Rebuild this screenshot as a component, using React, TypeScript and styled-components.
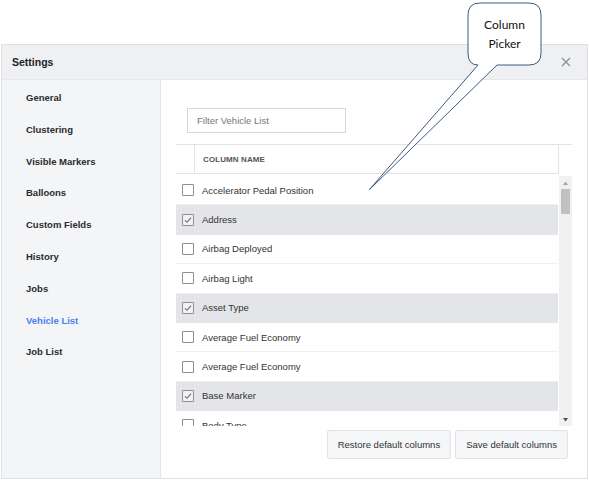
import React from 'react';
import styled, { createGlobalStyle } from 'styled-components';

const GlobalStyle = createGlobalStyle`
  html, body {
    margin: 0;
    padding: 0;
    background: #fff;
  }
  * {
    box-sizing: border-box;
  }
`;

const Page = styled.div`
  position: relative;
  width: 589px;
  height: 481px;
  padding: 44px 0 0 1px;
  overflow: hidden;
  font-family: 'Liberation Sans', Arial, sans-serif;
`;

const Dialog = styled.div`
  width: 587px;
  height: 435px;
  border: 1px solid #dfe0e3;
  display: flex;
  flex-direction: column;
  background: #fff;
`;

const Header = styled.div`
  height: 35px;
  flex: none;
  display: flex;
  align-items: center;
  justify-content: space-between;
  padding: 0 16px 0 10px;
  background: #eef0f2;
  border-bottom: 1px solid #e6e7ea;
`;

const Title = styled.div`
  font-size: 10.5px;
  font-weight: bold;
  color: #222;
`;

const CloseButton = styled.button`
  width: 11px;
  height: 11px;
  padding: 0;
  border: 0;
  background: none;
  display: flex;
  align-items: center;
  justify-content: center;
  cursor: pointer;
`;

const Body = styled.div`
  flex: 1;
  display: flex;
  min-height: 0;
`;

const Sidebar = styled.nav`
  width: 159px;
  flex: none;
  background: #f4f5f7;
  border-right: 1px solid #e4e5e8;
  padding-top: 2px;
`;

const NavItem = styled.div<{ $active?: boolean }>`
  height: 31.8px;
  line-height: 31.8px;
  padding-left: 24px;
  font-size: 9.5px;
  font-weight: bold;
  color: ${(p) => (p.$active ? '#4a7ff0' : '#2b2b2b')};
  cursor: pointer;
`;

const Content = styled.div`
  flex: 1;
  padding: 28px 16px 0 15px;
  display: flex;
  flex-direction: column;
`;

const FilterInput = styled.input`
  width: 159px;
  height: 25px;
  margin-left: 11px;
  border: 1px solid #d6d7da;
  padding: 0 9px;
  font-family: inherit;
  font-size: 9.5px;
  color: #333;
  outline: none;
  &::placeholder {
    color: #767676;
  }
`;

const TableHead = styled.div`
  margin-top: 11px;
  height: 30px;
  display: flex;
  border-top: 1px solid #e3e4e7;
`;

const HeadCells = styled.div`
  width: 383px;
  display: flex;
  border-right: 1px solid #e3e4e7;
  border-bottom: 1px solid #e3e4e7;
`;

const HeadCheckCol = styled.div`
  width: 19px;
  border-right: 1px solid #e3e4e7;
`;

const HeadLabel = styled.div`
  flex: 1;
  display: flex;
  align-items: center;
  padding-left: 8px;
  font-size: 8px;
  font-weight: bold;
  color: #555;
  letter-spacing: 0.1px;
`;

const ScrollArea = styled.div`
  height: 252px;
  padding-top: 2px;
  display: flex;
`;

const RowList = styled.div`
  width: 382px;
  overflow: hidden;
`;

const Row = styled.label<{ $checked: boolean }>`
  height: 29.4px;
  display: flex;
  align-items: center;
  gap: 8px;
  padding-left: 6px;
  background: ${(p) => (p.$checked ? '#e4e5e8' : '#fff')};
  border-bottom: 1px solid ${(p) => (p.$checked ? '#e4e5e8' : '#efeff1')};
  font-size: 9.5px;
  color: #333;
  cursor: pointer;
`;

const Box = styled.span<{ $checked: boolean }>`
  width: 12px;
  height: 12px;
  flex: none;
  border: 1px solid #8e8e8e;
  border-radius: 1px;
  background: ${(p) => (p.$checked ? '#f2f2f3' : '#fff')};
  display: flex;
  align-items: center;
  justify-content: center;
`;

const ScrollTrack = styled.div`
  width: 13px;
  margin-left: 1px;
  background: #f1f1f1;
  display: flex;
  flex-direction: column;
`;

const ScrollArrow = styled.div`
  height: 13px;
  display: flex;
  align-items: center;
  justify-content: center;
`;

const ScrollThumb = styled.div`
  height: 25px;
  margin: 0 2px;
  background: #c1c1c1;
`;

const ScrollSpacer = styled.div`
  flex: 1;
`;

const Actions = styled.div`
  display: flex;
  justify-content: flex-end;
  gap: 4px;
  margin-top: 4px;
  padding-right: 4px;
`;

const Button = styled.button`
  height: 29px;
  padding: 0 10px;
  border: 1px solid #e2e3e5;
  border-radius: 2px;
  background: #f5f6f7;
  font-family: 'Liberation Sans', Arial, sans-serif;
  font-size: 9.5px;
  line-height: 27px;
  color: #333;
  white-space: nowrap;
  cursor: pointer;
`;

const Callout = styled.div`
  position: absolute;
  left: 360px;
  top: 0;
  width: 185px;
  height: 195px;
  pointer-events: none;
`;

const CalloutLabel = styled.div`
  position: absolute;
  left: 108px;
  top: 3px;
  width: 73px;
  height: 62px;
  display: flex;
  flex-direction: column;
  align-items: center;
  justify-content: center;
  font-family: Lato, 'Open Sans', sans-serif;
  font-size: 12px;
  line-height: 19px;
  color: #111;
`;

const navItems = [
  'General',
  'Clustering',
  'Visible Markers',
  'Balloons',
  'Custom Fields',
  'History',
  'Jobs',
  'Vehicle List',
  'Job List',
];

const columns = [
  { name: 'Accelerator Pedal Position', checked: false },
  { name: 'Address', checked: true },
  { name: 'Airbag Deployed', checked: false },
  { name: 'Airbag Light', checked: false },
  { name: 'Asset Type', checked: true },
  { name: 'Average Fuel Economy', checked: false },
  { name: 'Average Fuel Economy', checked: false },
  { name: 'Base Marker', checked: true },
  { name: 'Body Type', checked: false },
];

const App: React.FC = () => {
  return (
    <>
      <GlobalStyle />
      <Page>
        <Dialog>
          <Header>
            <Title>Settings</Title>
            <CloseButton aria-label="Close">
              <svg width="10" height="10" viewBox="0 0 10 10">
                <path d="M1 1 L9 9 M9 1 L1 9" stroke="#8791a4" strokeWidth="1.2" fill="none" />
              </svg>
            </CloseButton>
          </Header>
          <Body>
            <Sidebar>
              {navItems.map((item) => (
                <NavItem key={item} $active={item === 'Vehicle List'}>
                  {item}
                </NavItem>
              ))}
            </Sidebar>
            <Content>
              <FilterInput placeholder="Filter Vehicle List" />
              <TableHead>
                <HeadCells>
                  <HeadCheckCol />
                  <HeadLabel>COLUMN NAME</HeadLabel>
                </HeadCells>
              </TableHead>
              <ScrollArea>
                <RowList>
                  {columns.map((col, i) => (
                    <Row key={i} $checked={col.checked}>
                      <Box $checked={col.checked}>
                        {col.checked && (
                          <svg width="8" height="8" viewBox="0 0 8 8">
                            <path d="M1 4.3 L3 6.3 L7 1.6" stroke="#6b6b6b" strokeWidth="1.1" fill="none" />
                          </svg>
                        )}
                      </Box>
                      {col.name}
                    </Row>
                  ))}
                </RowList>
                <ScrollTrack>
                  <ScrollArrow>
                    <svg width="5" height="4" viewBox="0 0 5 4">
                      <path d="M0 4 L2.5 0.5 L5 4 Z" fill="#a3a3a3" />
                    </svg>
                  </ScrollArrow>
                  <ScrollThumb />
                  <ScrollSpacer />
                  <ScrollArrow>
                    <svg width="5" height="4" viewBox="0 0 5 4">
                      <path d="M0 0 L2.5 3.5 L5 0 Z" fill="#505050" />
                    </svg>
                  </ScrollArrow>
                </ScrollTrack>
              </ScrollArea>
              <Actions>
                <Button>Restore default columns</Button>
                <Button>Save default columns</Button>
              </Actions>
            </Content>
          </Body>
        </Dialog>

        <Callout>
          <svg width="185" height="195" viewBox="0 0 185 195">
            <path
              d="M118 65 L9 190 L137 65 L169 65 Q181 65 181 53 L181 15 Q181 3 169 3 L120 3 Q108 3 108 15 L108 53 Q108 65 118 65 Z"
              fill="#fff"
              stroke="#3d5a86"
              strokeWidth="1"
              strokeLinejoin="round"
            />
          </svg>
          <CalloutLabel>
            <span>Column</span>
            <span>Picker</span>
          </CalloutLabel>
        </Callout>
      </Page>
    </>
  );
};

export default App;
